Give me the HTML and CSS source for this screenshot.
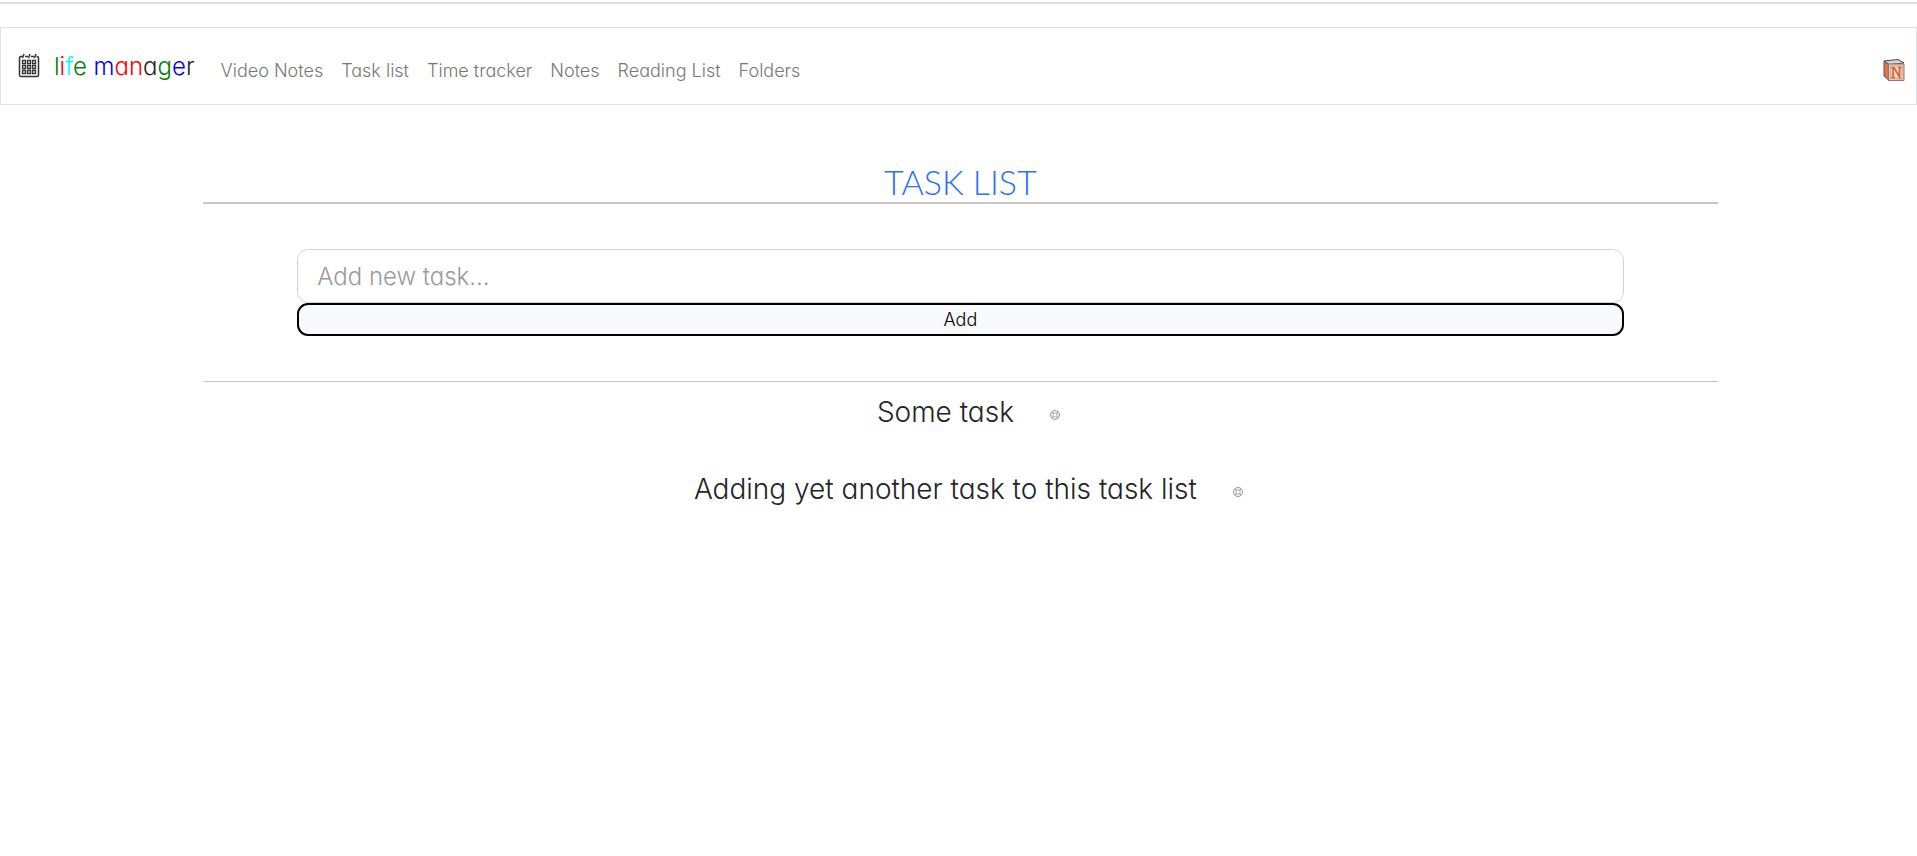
FILE: index.html
```html
<!DOCTYPE html>
<html lang="en">
<head>
<meta charset="utf-8">
<title>Life manager - Task list</title>
<link rel="stylesheet" href="styles.css">
</head>
<body>
<hr class="page-rule">
<nav class="navbar">
  <a class="brand" href="#">
    <svg class="brand-icon" viewBox="0 0 22 25" fill="none" stroke="#333" aria-hidden="true">
      <path d="M4.500 3.500H3Q1.500 3.500 1.500 5V22Q1.500 23.500 3 23.500H19Q20.500 23.500 20.500 22V5Q20.500 3.500 19 3.500H18.500M7 3.500H10M13 3.500H16" stroke-width="1.500"/>
      <path d="M4.500 5L6 1M10.500 5L12 1M16.500 5L18 1" stroke-width="1.500"/>
      <path d="M4.500 7.500h3v3h-3zM9.500 7.500h3v3h-3zM14.500 7.500h3v3h-3zM4.500 12.500h3v3h-3zM9.500 12.500h3v3h-3zM14.500 12.500h3v3h-3zM4.500 17.500h3v3h-3zM9.500 17.500h3v3h-3zM14.500 17.500h3v3h-3z" stroke-width="1.300"/>
    </svg>
    <span class="brand-name"><span class="green">l</span><span class="red">i</span><span class="cyan">f</span><span class="green">e</span> <span class="blue">m</span><span class="red">an</span>a<span class="green">g</span><span class="blue">e</span>r</span>
  </a>
  <div class="nav-links">
    <a href="#">Video Notes</a>
    <a href="#">Task list</a>
    <a href="#">Time tracker</a>
    <a href="#">Notes</a>
    <a href="#">Reading List</a>
    <a href="#">Folders</a>
  </div>
  <a class="block-link" href="#" aria-label="Notes block">
    <svg class="block-icon" viewBox="0 0 22 23" aria-hidden="true">
      <path d="M1 2L15 .500L21 4L6 5.500Z" fill="#d9d0d0" stroke="#4a4248"/>
      <path d="M1 2L6 5.500V21.500L1 17Z" fill="#dc7453" stroke="#665458"/>
      <path d="M5.500 5H21V21.500H5.500Z" fill="#edc8a6" stroke="#8a7b76"/>
      <path d="M7.500 7H19V19.500H7.500Z" fill="#f2d5b5" stroke="#d9a78d"/>
      <path d="M8.500 18.500H12M10 18V8.500M8.500 8.500H11L16.500 18V8.500M15 8.500H18.500" fill="none" stroke="#cf6244" stroke-width="1.600"/>
    </svg>
  </a>
</nav>
<main class="content">
  <h1 class="title">TASK LIST</h1>
  <form class="task-form">
    <input class="task-input" type="text" placeholder="Add new task..." aria-label="New task">
    <button class="add-button" type="button">Add</button>
  </form>
  <ul class="tasks">
    <li class="task"><span>Some task</span>
      <button class="remove" type="button" aria-label="Remove Some task"><svg viewBox="0 0 10 10" fill="none" stroke="#888"><circle cx="5" cy="5" r="4.500" stroke-width=".9"/><path d="M2 2L3.500 3.500M8 2L6.500 3.500M2 8L3.500 6.500M8 8L6.500 6.500M3 3H7V7H3Z" stroke-width=".7"/></svg></button>
    </li>
    <li class="task"><span>Adding yet another task to this task list</span>
      <button class="remove" type="button" aria-label="Remove second task"><svg viewBox="0 0 10 10" fill="none" stroke="#888"><circle cx="5" cy="5" r="4.500" stroke-width=".9"/><path d="M2 2L3.500 3.500M8 2L6.500 3.500M2 8L3.500 6.500M8 8L6.500 6.500M3 3H7V7H3Z" stroke-width=".7"/></svg></button>
    </li>
  </ul>
</main>
</body>
</html>
```
FILE: styles.css
```css
* { box-sizing: border-box; }
body {
  margin: 0;
  padding-top: 2px;
  background: #fff;
  color: #212529;
  font-family: "Century Gothic", Inter, Lato, sans-serif;
  font-feature-settings: "cv11";
  font-weight: 300;
  font-size: 18px;
  line-height: 24px;
}
a { color: inherit; text-decoration: none; }
.page-rule { margin: 0 0 23px; border: 0; border-top: 2px solid #ddd; }
.navbar {
  display: flex;
  align-items: center;
  min-height: 78px;
  padding: 0 11px 0 17px;
  border: 1px solid #dee2e6;
}
.brand { display: flex; align-items: center; gap: 14px; padding-bottom: 2px; color: #222; font-size: 24px; }
.brand-icon { width: 22px; height: 25px; }
.brand-name { padding-top: 3px; }
.green { color: #008000; }
.red { color: #f00; }
.cyan { color: #0ff; }
.blue { color: #00f; }
.nav-links { display: flex; gap: 18px; margin-left: 26px; padding-top: 10px; color: #777; }
.block-link { display: flex; margin-left: auto; padding-top: 9px; }
.block-icon { width: 22px; height: 23px; }
.content { width: 79%; margin: 56px 0 0 10.6%; }
.title {
  margin: 0;
  border-bottom: 2px solid #c8c8c8;
  color: #2b6fff;
  font-family: "Century Gothic", Lato, sans-serif;
  font-size: 34px;
  font-weight: 300;
  line-height: 41px;
  text-align: center;
}
.task-form {
  display: flex;
  flex-direction: column;
  padding: 45px 94px;
  border-bottom: 1px solid #c8c8c8;
}
.task-input, .add-button { width: 100%; border-radius: 11px; font: inherit; font-feature-settings: inherit; }
.task-input { height: 54px; padding: 0 19px; border: 1px solid #d3d3dc; background: #fff; font-size: 24px; }
.task-input::placeholder { color: #999; opacity: 1; }
.add-button { height: 33px; padding: 0; border: 2px solid #000; background: #f8f9fa; color: #000; }
.tasks { display: grid; gap: 45px; margin: 0; padding: 14px 0; list-style: none; }
.task { display: flex; justify-content: center; align-items: center; gap: 36px; padding-left: 16px; font-size: 28px; line-height: 32px; }
.remove { display: flex; padding: 5px 0 0; border: 0; background: none; }
.remove svg { width: 10px; height: 10px; }
```
